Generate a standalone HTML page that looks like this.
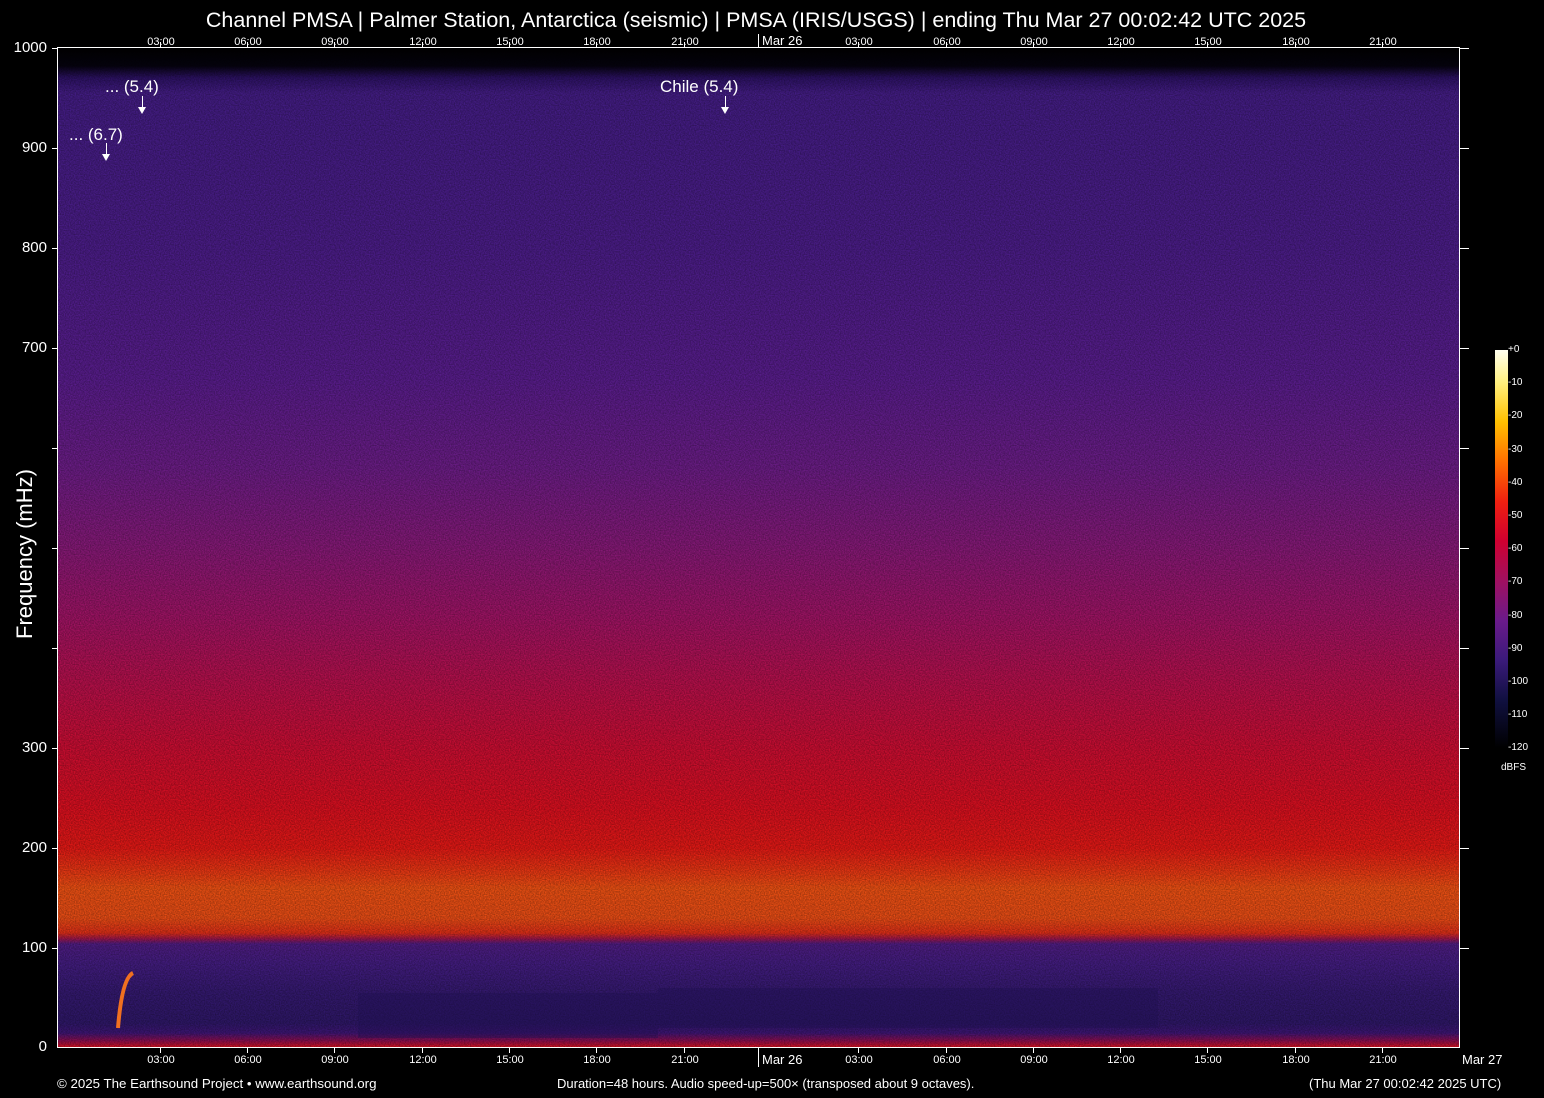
<!DOCTYPE html>
<html><head><meta charset="utf-8"><style>
body{margin:0;width:1544px;height:1098px;background:#000;position:relative;overflow:hidden;font-family:"Liberation Sans",sans-serif;color:#fff}
.a{position:absolute}
#plot{left:58px;top:48px;width:1401px;height:999px;background:linear-gradient(to bottom,#000 0px,#05020f 18px,#2e1268 30px,#461e8a 45px,#4e1e8e 200px,#5c1e92 330px,#701e8c 420px,#8c1a7c 500px,#a61468 570px,#c0104c 640px,#d40e34 700px,#e41020 760px,#ee1a16 800px,#f43814 822px,#f85414 840px,#f45016 870px,#e83018 885px,#a01650 891px,#521e88 896px,#461e86 915px,#361a74 945px,#30186c 975px,#40167a 985px,#940e50 993px,#dc1222 999px)}
.yl{position:absolute;right:1497px;font-size:15px;width:60px;text-align:right}
.tk{position:absolute;background:#fff}
.xl{position:absolute;font-size:11px;transform:translateX(-50%)}
</style></head><body>
<div class="a" style="left:0;width:1512px;top:8px;text-align:center;font-size:21.5px">Channel PMSA | Palmer Station, Antarctica (seismic) | PMSA (IRIS/USGS) | ending Thu Mar 27 00:02:42 UTC 2025</div>
<div id="plot" class="a"></div>
<svg class="a" style="left:58px;top:48px" width="1401" height="999">
<defs><filter id="n"><feTurbulence type="fractalNoise" baseFrequency="0.8" numOctaves="1" seed="3"/><feColorMatrix values="0 0 0 0 0  0 0 0 0 0  0 0 0 0 0  0 0 0 0.6 -0.1"/></filter></defs>
<rect x="0" y="30" width="1401" height="969" filter="url(#n)"/>
<rect x="300" y="945" width="300" height="45" fill="#1e1050" opacity="0.4"/>
<rect x="600" y="940" width="500" height="40" fill="#1e1050" opacity="0.4"/>
<path d="M60 980 Q64 930 75 925" stroke="#f07020" stroke-width="4" fill="none"/>
</svg>
<div class="a" style="left:58px;top:47px;width:1401px;height:1px;background:#fff"></div>
<div class="a" style="left:58px;top:1047px;width:1401px;height:1px;background:#fff"></div>
<div class="a" style="left:57px;top:47px;width:1px;height:1001px;background:#fff"></div>
<div class="a" style="left:1459px;top:47px;width:1px;height:1001px;background:#fff"></div>
<div class="yl" style="top:39px">1000</div><div class="yl" style="top:139px">900</div><div class="yl" style="top:239px">800</div><div class="yl" style="top:339px">700</div><div class="yl" style="top:739px">300</div><div class="yl" style="top:839px">200</div><div class="yl" style="top:939px">100</div><div class="yl" style="top:1038px">0</div>
<div id="ticks"></div>
<div class="a" style="left:-80px;top:541px;width:210px;text-align:center;transform:rotate(-90deg);font-size:22px">Frequency (mHz)</div>
<div class="a" style="left:105px;top:77px;font-size:17px">... (5.4)</div>
<div class="a" style="left:69px;top:125px;font-size:17px">... (6.7)</div>
<div class="a" style="left:660px;top:77px;font-size:17px">Chile (5.4)</div>
<div class="a" style="left:142px;top:96px;width:1px;height:12px;background:#fff"></div><div class="a" style="left:138px;top:107px;border:4px solid transparent;border-top:7px solid #fff"></div>
<div class="a" style="left:106px;top:143px;width:1px;height:12px;background:#fff"></div><div class="a" style="left:102px;top:154px;border:4px solid transparent;border-top:7px solid #fff"></div>
<div class="a" style="left:725px;top:96px;width:1px;height:12px;background:#fff"></div><div class="a" style="left:721px;top:107px;border:4px solid transparent;border-top:7px solid #fff"></div>
<div class="a" style="left:1495px;top:350px;width:13px;height:398px;background:linear-gradient(to bottom,#fffff0,#fff080 8%,#ffc000 18%,#ff7000 28%,#f02010 38%,#d00030 48%,#a01060 58%,#6a1a8a 68%,#3a1a7a 78%,#101040 88%,#000 100%)"></div>
<div id="cb"></div>
<div class="a" style="left:1501px;top:762px;font-size:10px">dBFS</div>
<div class="a" style="left:1462px;top:1052px;font-size:13px">Mar 27</div>
<div class="a" style="left:57px;top:1076px;font-size:13.3px">© 2025 The Earthsound Project • www.earthsound.org</div>
<div class="a" style="left:557px;top:1076px;font-size:13px">Duration=48 hours. Audio speed-up=500× (transposed about 9 octaves).</div>
<div class="a" style="left:1309px;top:1076px;font-size:13px">(Thu Mar 27 00:02:42 2025 UTC)</div>
<script>
var t=document.getElementById('ticks'),h='';
[48,148,248,348,448,548,648,748,848,948].forEach(function(y){h+='<div class="tk" style="left:52px;top:'+y+'px;width:6px;height:1px"></div><div class="tk" style="left:1459px;top:'+y+'px;width:10px;height:1px"></div>';});
var L=['03:00','06:00','09:00','12:00','15:00','18:00','21:00','Mar 26','03:00','06:00','09:00','12:00','15:00','18:00','21:00'];
for(var i=0;i<15;i++){var x=Math.round(72.5+87.3*(i+1));if(i==7)x=758;
h+='<div class="tk" style="left:'+x+'px;top:1047px;width:1px;height:'+(i==7?20:6)+'px"></div><div class="tk" style="left:'+x+'px;top:'+(i==7?34:42)+'px;width:1px;height:'+(i==7?14:6)+'px"></div>';
if(i==7){h+='<div class="a" style="left:762px;top:1052px;font-size:13px">Mar 26</div><div class="a" style="left:762px;top:33px;font-size:13px">Mar 26</div>';}
else{h+='<div class="xl" style="left:'+(x+1)+'px;top:1054px">'+L[i]+'</div><div class="xl" style="left:'+(x+1)+'px;top:36px">'+L[i]+'</div>';}}
t.innerHTML=h;
var c='';for(var k=0;k<=12;k++){var y=350+k*33.2;c+='<div class="a" style="left:1508px;top:'+(y-6)+'px;font-size:10px">'+(k==0?'+0':'-'+k*10)+'</div>';}
document.getElementById('cb').innerHTML=c;
</script>
</body></html>
